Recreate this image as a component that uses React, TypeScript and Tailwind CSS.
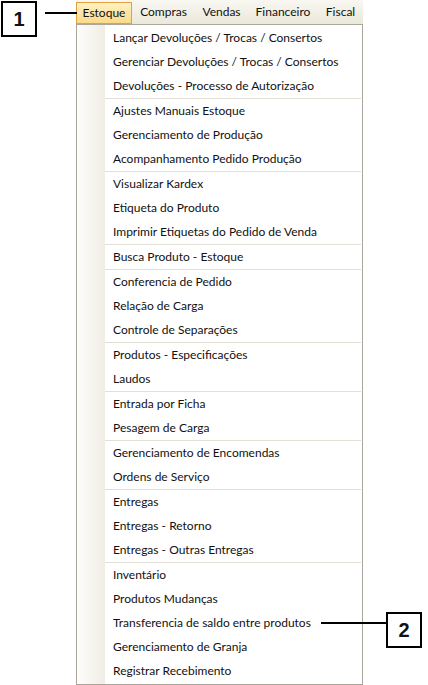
import React from "react";

const groups: string[][] = [
  ["Lançar Devoluções / Trocas / Consertos", "Gerenciar Devoluções / Trocas / Consertos", "Devoluções - Processo de Autorização"],
  ["Ajustes Manuais Estoque", "Gerenciamento de Produção", "Acompanhamento Pedido Produção"],
  ["Visualizar Kardex", "Etiqueta do Produto", "Imprimir Etiquetas do Pedido de Venda"],
  ["Busca Produto - Estoque"],
  ["Conferencia de Pedido", "Relação de Carga", "Controle de Separações"],
  ["Produtos - Especificações", "Laudos"],
  ["Entrada por Ficha", "Pesagem de Carga"],
  ["Gerenciamento de Encomendas", "Ordens de Serviço"],
  ["Entregas", "Entregas - Retorno", "Entregas - Outras Entregas"],
  ["Inventário", "Produtos Mudanças", "Transferencia de saldo entre produtos", "Gerenciamento de Granja", "Registrar Recebimento"],
];

export default function App() {
  return (
    <div
      className="relative w-[428px] h-[685px] bg-white overflow-hidden text-[12px] text-[#111]"
      style={{ fontFamily: 'Lato, "Noto Sans", sans-serif' }}
    >
      {/* menu bar */}
      <div className="ml-[76px] w-[287px] h-[24px] flex items-center bg-gradient-to-b from-[#f8f7f1] to-[#ebe8db]">
        <div className="w-[56px] h-[22px] mt-[1px] flex items-center justify-center border border-[#e3a03c] bg-gradient-to-b from-[#fff1c2] to-[#fbd98a]">
          Estoque
        </div>
        <div className="w-[63px] text-center">Compras</div>
        <div className="w-[53px] text-center">Vendas</div>
        <div className="w-[70px] text-center">Financeiro</div>
        <div className="w-[45px] text-center">Fiscal</div>
      </div>

      {/* dropdown */}
      <div className="ml-[76px] w-[287px] border border-[#aaa69c] bg-white py-[1px] relative">
        <div className="absolute left-0 top-0 bottom-0 w-[28px] bg-gradient-to-r from-[#fdfdfb] to-[#efede4]" />
        {groups.map((g, gi) => (
          <div key={gi} className="relative">
            {gi > 0 && <div className="ml-[28px] mr-[1px] h-[1px] bg-[#e3dfd4]" />}
            {g.map((item) => (
              <div key={item} className="h-[24px] flex items-center pl-[36px] whitespace-nowrap">
                {item}
              </div>
            ))}
          </div>
        ))}
      </div>

      {/* annotation 1 */}
      <div className="absolute left-[1px] top-[1px] w-[36px] h-[36px] border-2 border-black bg-white flex items-center justify-center text-[20px] font-bold" style={{ fontFamily: '"Liberation Sans", sans-serif' }}>
        1
      </div>
      <div className="absolute left-[45px] top-[12px] w-[32px] h-[2px] bg-black" />

      {/* annotation 2 */}
      <div className="absolute left-[386px] top-[612px] w-[36px] h-[36px] border-2 border-black bg-white flex items-center justify-center text-[20px] font-bold" style={{ fontFamily: '"Liberation Sans", sans-serif' }}>
        2
      </div>
      <div className="absolute left-[321px] top-[622px] w-[65px] h-[2px] bg-black" />
    </div>
  );
}
